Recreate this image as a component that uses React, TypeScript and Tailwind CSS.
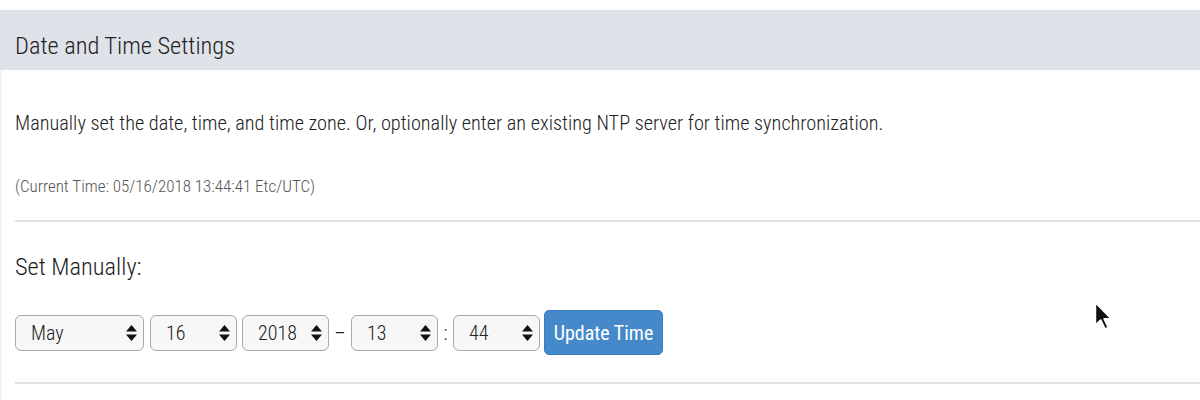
import React from 'react';

const FONT = "font-['Roboto_Condensed','Roboto','Liberation_Sans',sans-serif]";

interface SelectBoxProps {
    value: string;
    options: string[];
    width: string;
}

const SelectBox: React.FC<SelectBoxProps> = ({ value, options, width }) => {
    return (
        <div className={`relative h-[36px] ${width}`}>
            <select
                defaultValue={value}
                className={`h-full w-full appearance-none rounded-[6px] border border-[#a9a9a9] bg-[#f7f7f7] pl-[15px] text-[20px] font-light text-[#222] outline-none ${FONT}`}
            >
                {options.map((o) => (
                    <option key={o} value={o}>
                        {o}
                    </option>
                ))}
            </select>
            {/* stepper arrows */}
            <svg
                className="pointer-events-none absolute right-[7px] top-1/2 -translate-y-1/2"
                width="11"
                height="16"
                viewBox="0 0 11 16"
            >
                <path d="M5.5 0 L11 6.5 H0 Z" fill="#111" />
                <path d="M5.5 16 L11 9.5 H0 Z" fill="#111" />
            </svg>
        </div>
    );
};

const months = ['January', 'February', 'March', 'April', 'May', 'June', 'July', 'August', 'September', 'October', 'November', 'December'];
const range = (a: number, b: number) => Array.from({ length: b - a + 1 }, (_, i) => String(a + i).padStart(2, '0').replace(/^0(?=\d\d)/, ''));

export default function App() {
    return (
        <div className={`relative min-h-[400px] w-[1200px] bg-white pt-[10px] font-light text-[#222] ${FONT}`}>
            {/* タイトル */}
            <div className="h-[60px] bg-[#dfe2e8] pl-[15px] pt-[20px] text-[24.4px] leading-[32px]">Date and Time Settings</div>

            <div className="min-h-[330px] border-l-[2px] border-[#f4f4f4] pl-[13px]">
                <p className="pt-[39px] text-[20.3px] leading-[28px]">
                    Manually set the date, time, and time zone. Or, optionally enter an existing NTP server for time synchronization.
                </p>
                <p className="mt-[38px] text-[17px] leading-[22px] text-[#555]">(Current Time: 05/16/2018 13:44:41 Etc/UTC)</p>

                <div className="mt-[23px] h-[2px] bg-[#e1e1e1]" />

                <div className="mt-[30px] text-[24.4px] leading-[30px]">Set Manually:</div>

                <div className="mt-[28px] flex items-center">
                    <SelectBox value="May" options={months.map((m) => m.slice(0, 3))} width="w-[129px]" />
                    <div className="w-[6px]" />
                    <SelectBox value="16" options={range(1, 31)} width="w-[87px]" />
                    <div className="w-[5px]" />
                    <SelectBox value="2018" options={['2016', '2017', '2018', '2019', '2020']} width="w-[87px]" />
                    <span className="w-[22px] text-center text-[20px]">–</span>
                    <SelectBox value="13" options={range(0, 23)} width="w-[87px]" />
                    <span className="w-[15px] text-center text-[20px]">:</span>
                    <SelectBox value="44" options={range(0, 59)} width="w-[87px]" />
                    <button className="ml-[4px] h-[45px] w-[119px] rounded-[5px] border border-[#3a7bbf] bg-[#4689ca] text-[20px] font-normal text-white">
                        Update Time
                    </button>
                </div>

                <div className="mt-[27px] h-[2px] bg-[#e1e1e1]" />
            </div>

            {/* マウスカーソル */}
            <svg className="pointer-events-none absolute left-[1093px] top-[300px]" width="20" height="31" viewBox="0 0 13 20">
                <path
                    d="M1.5 1.5 L1.5 16.5 L5 13 L7.8 18.8 L10 17.8 L7.3 12.2 L12 12.2 Z"
                    fill="#111"
                    stroke="#fff"
                    strokeWidth="1.2"
                    strokeLinejoin="round"
                />
            </svg>
        </div>
    );
}
